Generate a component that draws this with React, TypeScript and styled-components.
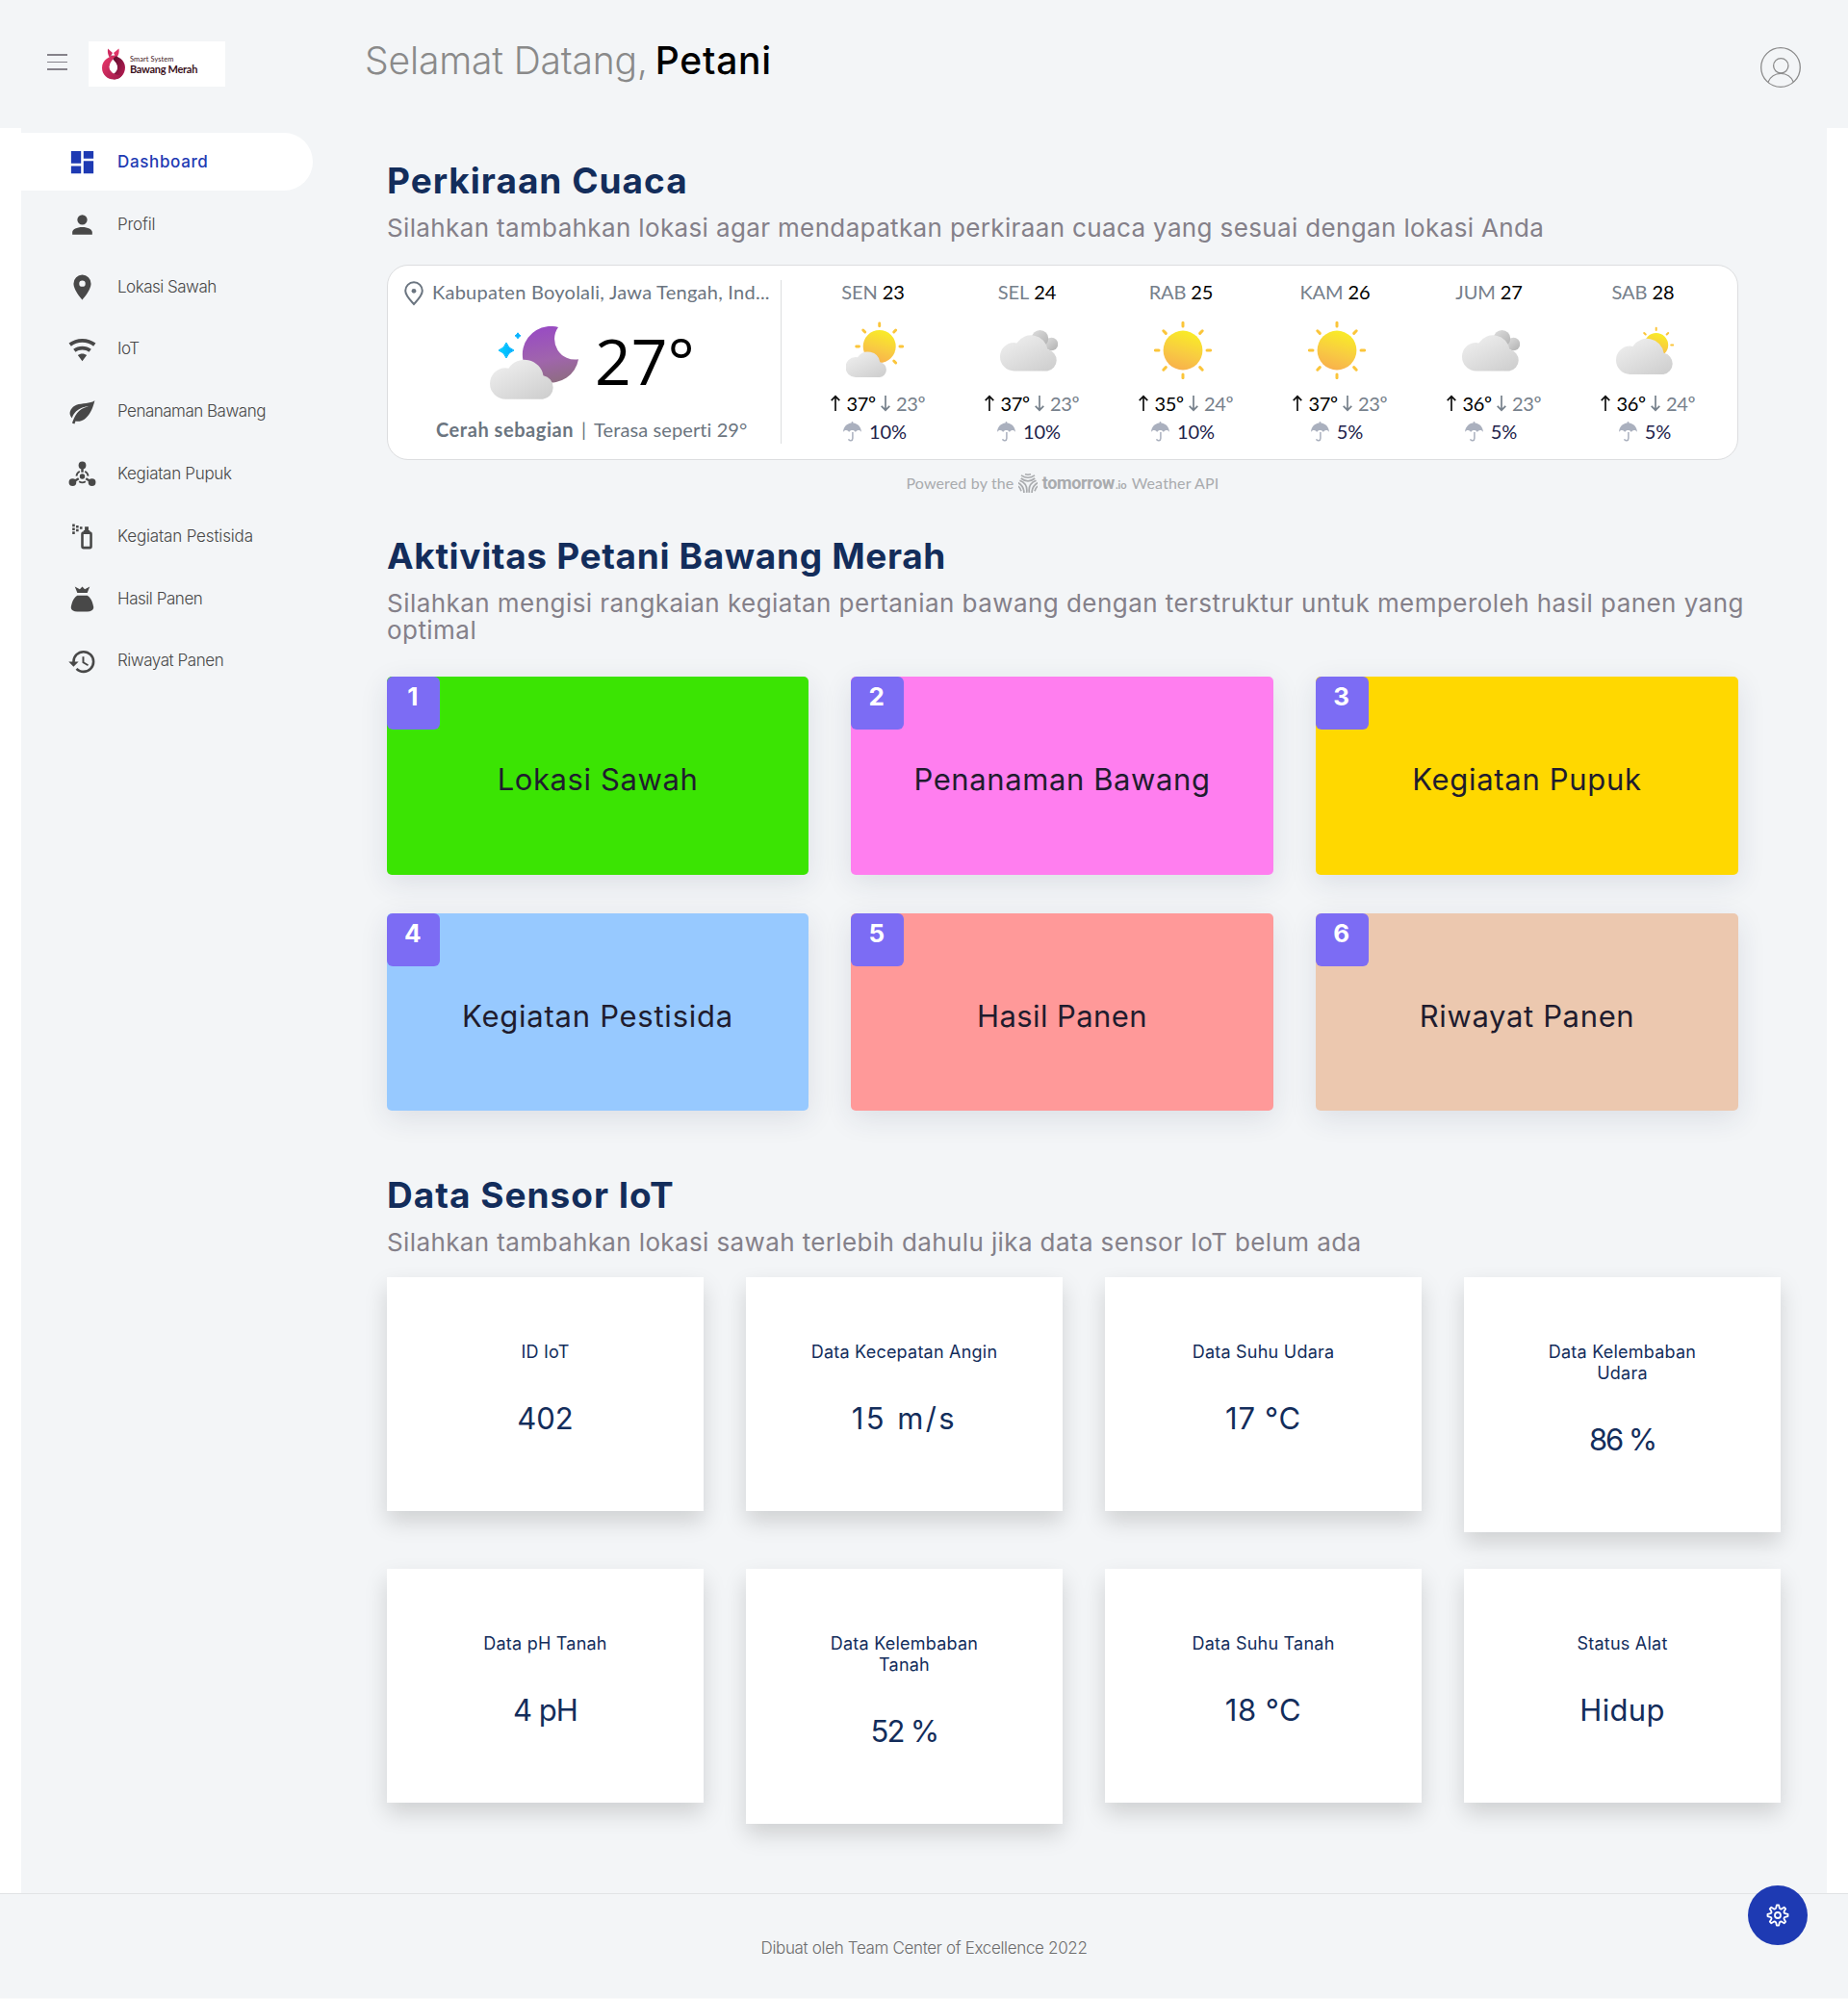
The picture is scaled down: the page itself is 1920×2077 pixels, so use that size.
import React from 'react';
import styled, { createGlobalStyle } from 'styled-components';

const BODY_FONT = `Inter, "Noto Sans", sans-serif`;
const WEATHER_FONT = `Lato, "Open Sans", sans-serif`;

const GlobalStyle = createGlobalStyle`
  *, *::before, *::after { box-sizing: border-box; }
  body { margin: 0; background: #fafafa; font-family: ${BODY_FONT}; }
  h1, h2, p { margin: 0; }
  svg { display: block; flex: none; }
`;

/* ---------- shared text ---------- */

const Tracked = styled.span<{ $ls?: number }>`
  letter-spacing: ${(p) => p.$ls ?? 0}px;
  white-space: nowrap;
`;

/* ---------- page shell ---------- */

const Page = styled.div`
  display: flex;
  flex-direction: column;
  width: 1920px;
  height: 2077px;
`;

const Header = styled.header`
  display: flex;
  align-items: flex-start;
  height: 133px;
  flex: none;
  padding: 0 49px;
  background: #f3f5f7;
`;

const MenuButton = styled.button`
  display: flex;
  flex-direction: column;
  gap: 6px;
  width: 21px;
  margin: 56px 22px 0 0;
  padding: 0;
  border: 0;
  background: none;
`;

const MenuLine = styled.span`
  height: 1.5px;
  background: #85828a;
`;

const Brand = styled.div`
  display: flex;
  width: 142px;
  height: 47px;
  margin-top: 43px;
  padding: 7px 0 0 14px;
  gap: 5px;
  background: #fff;
`;

const BrandText = styled.div`
  display: flex;
  flex-direction: column;
  padding-top: 7px;
  font-family: ${WEATHER_FONT};
  color: #3c1322;
`;

const BrandSmall = styled.span`
  font-size: 7.4px;
  line-height: 9px;
  letter-spacing: 0.1px;
`;

const BrandName = styled.span`
  font-size: 11px;
  line-height: 12px;
  font-weight: 700;
  letter-spacing: -0.3px;
  white-space: nowrap;
`;

const Greeting = styled.h1`
  flex: 1;
  display: flex;
  gap: 8px;
  margin: 38.5px 0 0 145px;
  font-size: 39px;
  line-height: 48px;
  font-weight: 300;
  letter-spacing: -0.15px;
  color: #8a8a8a;
`;

const GreetingName = styled.span`
  font-weight: 500;
  letter-spacing: 0.75px;
  color: #000;
`;

const Avatar = styled.div`
  margin-top: 48.5px;
`;

const Body = styled.div`
  display: flex;
  flex: none;
  height: 1834px;
  padding: 0 22px;
  background: #fff;
`;

const Footer = styled.footer`
  display: flex;
  align-items: center;
  justify-content: center;
  flex: none;
  height: 109px;
  border-top: 1px solid #e1e3e5;
  padding-top: 3px;
  background: #f3f5f7;
  font-size: 17px;
  line-height: 24px;
  font-weight: 300;
  color: #6c6c6c;
`;

const Fab = styled.button`
  position: fixed;
  left: 1816px;
  top: 1959px;
  display: flex;
  align-items: center;
  justify-content: center;
  width: 62px;
  height: 62px;
  padding: 0;
  border: 0;
  border-radius: 50%;
  background: #1e3ab3;
`;

/* ---------- sidebar ---------- */

const Sidebar = styled.nav`
  display: flex;
  flex-direction: column;
  gap: 4.8px;
  width: 304px;
  flex: none;
  padding-top: 5px;
  background: #f3f5f7;
`;

const NavItem = styled.a<{ $active?: boolean }>`
  display: flex;
  align-items: center;
  gap: 21px;
  height: 60px;
  width: 303px;
  padding-left: 48px;
  border-radius: 0 30px 30px 0;
  background: ${(p) => (p.$active ? '#fff' : 'transparent')};
  color: ${(p) => (p.$active ? '#1e3ab3' : '#484848')};
  font-size: 17px;
  font-weight: ${(p) => (p.$active ? 500 : 300)};

  svg { margin-top: 1.5px; }
`;

/* ---------- main sections ---------- */

const Main = styled.main`
  flex: 1;
  padding: 35px 48px 0 76px;
  background: #f3f5f7;
`;

const Section = styled.section<{ $top?: number }>`
  padding-top: ${(p) => p.$top ?? 0}px;
`;

const SectionTitle = styled.h2<{ $ls: number }>`
  font-size: 37px;
  line-height: 40px;
  font-weight: 700;
  letter-spacing: ${(p) => p.$ls}px;
  color: #132d5b;
`;

const SectionLead = styled.p<{ $gap: number; $ls?: number }>`
  margin-top: 15px;
  margin-bottom: ${(p) => p.$gap}px;
  font-size: 26px;
  line-height: 28px;
  letter-spacing: ${(p) => p.$ls ?? 0.38}px;
  color: #848089;
`;

/* ---------- weather ---------- */

const WeatherCard = styled.div`
  display: flex;
  width: 1404px;
  height: 203px;
  padding: 15.5px 16px;
  border: 1px solid #dcdddf;
  border-radius: 22px;
  background: #fff;
  font-family: ${WEATHER_FONT};
  font-size: 20px;
  line-height: 24px;
`;

const Current = styled.div`
  display: flex;
  flex-direction: column;
  width: 393px;
  border-right: 1px solid #dcdee0;
  color: #6b7580;
`;

const Place = styled.div`
  display: flex;
  gap: 9px;
  height: 24px;
  padding-left: 1px;

  svg { margin-top: 1px; }
`;

const CurrentReading = styled.div`
  display: flex;
  gap: 17px;
  height: 119px;
  padding: 23.5px 0 0 90px;
`;

const CurrentTemp = styled.span`
  font-family: "Open Sans", sans-serif;
  font-size: 66px;
  line-height: 70.5px;
  color: #000;
`;

const CurrentSummary = styled.div`
  display: flex;
  gap: 8px;
  padding-left: 34px;
`;

const Condition = styled.b`
  font-weight: 700;
  letter-spacing: 0.55px;
`;

const Forecast = styled.div`
  display: grid;
  grid-template-columns: repeat(6, 160px);
  margin-left: auto;
`;

const Day = styled.div`
  display: flex;
  flex-direction: column;
  align-items: center;
`;

const DayName = styled.div`
  display: flex;
  gap: 5px;
  padding-right: 4px;
  margin-bottom: 19px;
  letter-spacing: -0.1px;
  color: #76808b;
`;

const DayNumber = styled.span`
  color: #000;
`;

const Temps = styled.div`
  display: flex;
  align-items: center;
  margin-top: 13px;
  padding-left: 5px;
  letter-spacing: -0.3px;
`;

const TempValue = styled.span<{ $high?: boolean }>`
  width: 29.5px;
  margin: ${(p) => (p.$high ? '0 6px 0 7px' : '0 0 0 6px')};
  color: ${(p) => (p.$high ? '#000' : '#76808b')};
`;

const Rain = styled.div`
  display: flex;
  align-items: center;
  gap: 8px;
  margin-top: 5px;
  color: #22224a;
`;

const Credit = styled.div`
  display: flex;
  align-items: center;
  justify-content: center;
  width: 1404px;
  height: 20px;
  margin-top: 14px;
  font-family: ${WEATHER_FONT};
  font-size: 16px;
  line-height: 20px;
  color: #a9abae;
`;

const CreditBrand = styled.span`
  margin: 0 0 0 5px;
  font-family: Roboto, sans-serif;
  font-size: 18px;
  font-weight: 700;
  letter-spacing: -0.35px;
`;

const CreditTld = styled.span`
  margin: 4px 5px 0 1px;
  font-size: 11px;
  font-weight: 700;
`;

/* ---------- activities ---------- */

const ActivityGrid = styled.div`
  display: grid;
  grid-template-columns: 438px 439px 439px;
  grid-auto-rows: 205.7px;
  gap: 40px 44px;
  width: 1404px;
`;

const ActivityCard = styled.a<{ $color: string }>`
  position: relative;
  display: flex;
  align-items: center;
  justify-content: center;
  padding-top: 8px;
  border-radius: 5px;
  background: ${(p) => p.$color};
  box-shadow: 0 8px 30px rgba(40, 48, 80, 0.11);
  font-size: 31px;
  color: #1f1c2e;
`;

const StepBadge = styled.span`
  position: absolute;
  left: 0;
  top: 0;
  width: 55px;
  height: 55px;
  padding-right: 1.5px;
  border-radius: 6px;
  background: #7c6cf4;
  color: #fff;
  font-size: 26px;
  line-height: 41px;
  font-weight: 700;
  text-align: center;
`;

/* ---------- sensors ---------- */

const SensorGrid = styled.div`
  display: grid;
  grid-template-columns: repeat(4, 329px);
  gap: 38.5px 44px;
  align-items: start;
`;

const SensorCard = styled.div`
  display: flex;
  flex-direction: column;
  align-items: center;
  padding: 66.500px 66px 77.5px;
  background: #fff;
  box-shadow: 0 11px 22px rgba(0, 0, 0, 0.15);
  color: #132d5b;
  text-align: center;
`;

const SensorLabel = styled.span`
  font-size: 18px;
  line-height: 22px;
  letter-spacing: 0.23px;
`;

const SensorValue = styled.span<{ $ls: number }>`
  margin-top: 40.5px;
  font-size: 31px;
  line-height: 36px;
  letter-spacing: ${(p) => p.$ls}px;
`;

/* ---------- icons ---------- */

const NavIcon = ({ d }: { d: string }) => (
  <svg width="31" height="31" viewBox="0 0 24 24" fill="currentColor">
    <path d={d} fillRule="evenodd" />
  </svg>
);

const MoleculeIcon = () => (
  <svg width="31" height="31" viewBox="0 0 24 24" fill="currentColor">
    <circle cx="12" cy="5" r="3" />
    <circle cx="4.2" cy="18.6" r="3" />
    <circle cx="19.8" cy="18.6" r="3" />
    <circle cx="12" cy="14" r="2.1" />
    <g fill="none" stroke="currentColor" strokeWidth="1.4">
      <path d="M12 7v3.6M6.2 17.4l2.9-1.7M17.8 17.4l-2.9-1.7" strokeWidth="1.9" />
      <path d="M9.9 9.9A4.7 4.7 0 0 0 7.3 13.6M14.1 9.9a4.7 4.7 0 0 1 2.6 3.7M9.4 18a4.7 4.7 0 0 0 5.2 0" />
    </g>
  </svg>
);

const PinIcon = () => (
  <svg width="20" height="26" viewBox="0 0 20 26">
    <path d="M10 24C7 20.6 1.2 15.4 1.2 10.1a8.8 8.8 0 0 1 17.6 0C18.8 15.4 13 20.6 10 24z" fill="none" stroke="#6b7580" strokeWidth="2" />
    <circle cx="10" cy="10.3" r="2.4" fill="#6b7580" />
  </svg>
);

const AvatarIcon = () => (
  <svg width="42" height="42" viewBox="0 0 42 42" fill="none" stroke="#8b8b8b" strokeWidth="1.3">
    <circle cx="21" cy="21" r="20.3" />
    <circle cx="21.3" cy="19.3" r="7.7" />
    <path d="M8 36.3a14.2 14.2 0 0 1 26.4 0" />
  </svg>
);

const OnionLogo = () => (
  <svg width="24" height="33" viewBox="0 0 24 33">
    <defs>
      <linearGradient id="onionA" x1="0" y1="0" x2="1" y2="1">
        <stop offset="0" stopColor="#ee3a6d" />
        <stop offset="1" stopColor="#9c1748" />
      </linearGradient>
      <linearGradient id="onionB" x1="0" y1="0" x2="1" y2="0.6">
        <stop offset="0" stopColor="#4a0a24" />
        <stop offset="1" stopColor="#b01b50" />
      </linearGradient>
    </defs>
    <path d="M6 0.5L11 5 L8 10C6 7 5.6 4 6 .5z" fill="#d02a60" />
    <path d="M17.500 .5L12 5l3 5C17.500 7 18 4 17.500 .5z" fill="#e03568" />
    <path d="M9 8C15 7 24 12 24 20C24 28 18 32.500 12 32.500L12 26C16 24 17.500 18 12.500 13z" fill="url(#onionB)" />
    <path d="M15.500 7C8 8 0 12 0 20.500C0 28 6 32.500 12 32.500C16 32.500 19 31 21 28C16 29 8 26 8 19C8 14 12 11 15.500 7z" fill="url(#onionA)" />
    <path d="M11.800 12.500C14.500 15 16 17.500 16 20C16 23 14 25.500 12.300 26.500C9.500 25 7.500 22.500 7.500 19.500C7.500 17 9.500 14.500 11.800 12.500z" fill="#fff" />
  </svg>
);

const gearPath = Array.from({ length: 8 }, (_, k) => {
  const at = (deg: number, r: number) => {
    const a = ((k * 45 + deg) * Math.PI) / 180;
    return `${(12 + r * Math.cos(a)).toFixed(2)} ${(12 + r * Math.sin(a)).toFixed(2)}`;
  };
  return `${k === 0 ? 'M' : 'L'}${at(-6, 10.6)}L${at(6, 10.6)}L${at(13, 7.9)}Q${at(22.5, 6.5)} ${at(32, 7.9)}`;
}).join('') + 'z';

const GearIcon = () => (
  <svg width="24" height="24" viewBox="0 0 24 24" fill="none" stroke="#fff" strokeWidth="1.8" strokeLinejoin="round">
    <path d={gearPath} />
    <circle cx="12" cy="12" r="3" />
  </svg>
);

const ArrowIcon = ({ up }: { up?: boolean }) => (
  <svg width="10" height="18" viewBox="0 0 10 18" fill="none" stroke={up ? '#111' : '#76808b'} strokeWidth="1.7">
    <path d={up ? 'M5 17V1.500M.7 6.200L5 1.800L9.300 6.200' : 'M5 1V16.500M.7 11.800L5 16.200L9.300 11.800'} />
  </svg>
);

const UmbrellaIcon = () => (
  <svg width="19" height="21" viewBox="0 0 19 21">
    <path d="M9.500 0a.9.9 0 0 1 .9.900v.7c4.700.4 8.300 4 8.600 9.400-.9-1.400-2-2-3.100-2-1.300 0-2.300.7-3.100 2-.8-1.400-1.900-2-3.300-2s-2.500.6-3.300 2c-.8-1.300-1.800-2-3.100-2-1.100 0-2.200.6-3.100 2C.3 5.600 3.900 2 8.600 1.600V.9A.9.9 0 0 1 9.500 0z" fill="#aab0be" />
    <path d="M9.900 11v6.600a2.200 2.200 0 0 1-4.300.7" fill="none" stroke="#aab0be" strokeWidth="1.500" />
  </svg>
);

const TomorrowMark = () => (
  <svg width="20" height="20" viewBox="0 0 20 20" fill="none" stroke="#a9abae" strokeWidth="1.700">
    {[0, 120, 240].map((angle) => (
      <g key={angle} transform={`rotate(${angle} 10 10.7)`}>
        <path d="M7 .8Q10 1.700 13 .8M3 1.900Q10 6.600 17 1.900M2.800 5Q10 10.800 17.200 5" />
      </g>
    ))}
  </svg>
);

const CLOUD = 'M10.500 26A10.500 10.500 0 0 1 10.500 5Q11.500 5 12.500 5.300A12.800 12.800 0 0 1 35.800 10.200A8 8 0 0 1 35.500 26Z';

const DefsHolder = styled.svg`
  position: absolute;
`;

const WeatherDefs = () => (
  <DefsHolder width="0" height="0">
    <defs>
      <linearGradient id="sunFill" x1="0.65" y1="0.05" x2="0.35" y2="1">
        <stop offset="0" stopColor="#f9ea28" />
        <stop offset="0.55" stopColor="#f8cb42" />
        <stop offset="1" stopColor="#f8b04c" />
      </linearGradient>
      <linearGradient id="cloudFill" x1="0.1" y1="0" x2="0.9" y2="1">
        <stop offset="0" stopColor="#f0f0f0" />
        <stop offset="1" stopColor="#cecece" />
      </linearGradient>
      <linearGradient id="rearFill" x1="0.1" y1="0" x2="0.9" y2="1">
        <stop offset="0" stopColor="#dcdcdc" />
        <stop offset="1" stopColor="#b2b2b2" />
      </linearGradient>
      <linearGradient id="moonFill" x1="0.3" y1="0" x2="0.5" y2="1">
        <stop offset="0" stopColor="#984ac4" />
        <stop offset="0.6" stopColor="#a065ac" />
        <stop offset="1" stopColor="#8f6c84" />
      </linearGradient>
      <linearGradient id="starFill" x1="0" y1="0.5" x2="1" y2="0.5">
        <stop offset="0" stopColor="#00d8ff" />
        <stop offset="1" stopColor="#08a4ff" />
      </linearGradient>
    </defs>
  </DefsHolder>
);

type SunProps = { cx: number; cy: number; r: number; from: number; to: number; width: number };

const Sun = ({ cx, cy, r, from, to, width }: SunProps) => (
  <g>
    <g stroke="#fbc53a" strokeWidth={width} strokeLinecap="round">
      {Array.from({ length: 8 }, (_, k) => (
        <path key={k} d={`M${cx} ${cy - from}V${cy - to}`} transform={`rotate(${k * 45} ${cx} ${cy})`} />
      ))}
    </g>
    <circle cx={cx} cy={cy} r={r} fill="url(#sunFill)" />
  </g>
);

type Sky = 'sunny' | 'partly' | 'cloudy' | 'mostly';

const SkyIcon = ({ sky }: { sky: Sky }) => (
  <svg width="60" height="60" viewBox="0 0 60 60">
    {sky === 'sunny' && <Sun cx={30} cy={30} r={20.4} from={25} to={28.6} width={3} />}
    {sky === 'partly' && (
      <>
        <Sun cx={34.7} cy={26} r={17} from={21.2} to={24} width={2.900} />
        <path d={CLOUD} transform="translate(-0.5 32)" fill="url(#cloudFill)" />
      </>
    )}
    {sky === 'cloudy' && (
      <>
        <circle cx="53.500" cy="23.500" r="6.700" fill="url(#rearFill)" />
        <circle cx="41.500" cy="17.800" r="8.800" fill="url(#rearFill)" />
        <path d={CLOUD} transform="translate(0 15) scale(1.385 1.4)" fill="url(#cloudFill)" />
      </>
    )}
    {sky === 'mostly' && (
      <>
        <Sun cx={41.700} cy={24.500} r={12.500} from={15.500} to={17.700} width={2} />
        <path d={CLOUD} transform="translate(0 18.500) scale(1.385 1.4)" fill="url(#cloudFill)" />
      </>
    )}
  </svg>
);

const NightIcon = () => (
  <svg width="92" height="76" viewBox="0 0 92 76">
    <path d="M71 1A29.300 29.300 0 1 0 92 34.300A21.300 21.300 0 0 1 71 1Z" fill="url(#moonFill)" />
    <path d="M17 17Q19 23 25 25Q19 27 17 33Q15 27 9 25Q15 23 17 17Z" fill="url(#starFill)" stroke="#04bcff" strokeWidth="1" strokeLinejoin="round" />
    <path d="M29 6.800Q30 9 32 9.800Q30 10.600 29 12.800Q28 10.600 26 9.800Q28 9 29 6.800Z" fill="#08b4ff" stroke="#08b4ff" strokeWidth="1" />
    <path d={CLOUD} transform="translate(0 35.500) scale(1.55 1.545)" fill="url(#cloudFill)" />
  </svg>
);

/* ---------- data ---------- */

type NavEntry = { label: string; ls: number; d?: string };

const navItems: NavEntry[] = [
  { label: 'Dashboard', ls: 0.65, d: 'M13 3V9H21V3M13 21H21V11H13M3 21H11V15H3M3 13H11V3H3V13Z' },
  { label: 'Profil', ls: -0.2, d: 'M12 4A4 4 0 0 1 16 8A4 4 0 0 1 12 12A4 4 0 0 1 8 8A4 4 0 0 1 12 4M12 14C16.42 14 20 15.79 20 18V20H4V18C4 15.79 7.58 14 12 14Z' },
  { label: 'Lokasi Sawah', ls: -0.5, d: 'M12 11.5A2.5 2.5 0 0 1 9.5 9A2.5 2.5 0 0 1 12 6.5A2.5 2.5 0 0 1 14.5 9A2.5 2.5 0 0 1 12 11.5M12 2A7 7 0 0 0 5 9C5 14.25 12 22 12 22C12 22 19 14.25 19 9A7 7 0 0 0 12 2Z' },
  { label: 'IoT', ls: -0.5, d: 'M12 21L15.6 16.2C14.6 15.45 13.35 15 12 15C10.65 15 9.4 15.45 8.4 16.2L12 21M12 3C7.95 3 4.21 4.34 1.2 6.6L3 9C5.5 7.12 8.62 6 12 6C15.38 6 18.5 7.12 21 9L22.8 6.6C19.79 4.34 16.05 3 12 3M12 9C9.3 9 6.81 9.89 4.8 11.4L6.6 13.8C8.1 12.67 9.97 12 12 12C14.03 12 15.9 12.67 17.4 13.8L19.2 11.4C17.19 9.89 14.7 9 12 9Z' },
  { label: 'Penanaman Bawang', ls: -0.5, d: 'M17 8C8 10 5.9 16.17 3.82 21.34L5.71 22L6.66 19.7C7.14 19.87 7.64 20 8 20C19 20 22 3 22 3C21 5 14 5.25 9 6.25C4 7.25 2 11.5 2 13.5C2 15.5 3.75 17.25 3.75 17.25C7 8 17 8 17 8Z' },
  { label: 'Kegiatan Pupuk', ls: -0.3 },
  { label: 'Kegiatan Pestisida', ls: -0.15, d: 'M10 4H12V6H10V4M7 3H9V5H7V3M7 6H9V8H7V6M6 8V10H4V8H6M6 5V7H4V5H6M6 2V4H4V2H6M13 22A2 2 0 0 1 11 20V10A2 2 0 0 1 13 8V7H14V4H17V7H18V8A2 2 0 0 1 20 10V20A2 2 0 0 1 18 22H13M13 10V20H18V10H13Z' },
  { label: 'Hasil Panen', ls: -0.45, d: 'M16 9C20 11 21 18 21 18C21 18 22 22 16 22H8C2 22 3 18 3 18C3 18 4 11 8 9M14 4L12 2L10 4L6 2L8 7H16L18 2L14 4Z' },
  { label: 'Riwayat Panen', ls: -0.45, d: 'M13.5 8H12V13L16.28 15.54L17 14.33L13.5 12.25V8M13 3A9 9 0 0 0 4 12H1L4.96 16.03L9 12H6A7 7 0 0 1 13 5A7 7 0 0 1 20 12A7 7 0 0 1 13 19C11.07 19 9.32 18.21 8.06 16.94L6.64 18.36C8.27 20 10.5 21 13 21A9 9 0 0 0 22 12A9 9 0 0 0 13 3' },
];

const days: { name: string; date: number; sky: Sky; high: number; low: number; rain: number }[] = [
  { name: 'SEN', date: 23, sky: 'partly', high: 37, low: 23, rain: 10 },
  { name: 'SEL', date: 24, sky: 'cloudy', high: 37, low: 23, rain: 10 },
  { name: 'RAB', date: 25, sky: 'sunny', high: 35, low: 24, rain: 10 },
  { name: 'KAM', date: 26, sky: 'sunny', high: 37, low: 23, rain: 5 },
  { name: 'JUM', date: 27, sky: 'cloudy', high: 36, low: 23, rain: 5 },
  { name: 'SAB', date: 28, sky: 'mostly', high: 36, low: 24, rain: 5 },
];

const activities = [
  { label: 'Lokasi Sawah', color: '#3be403', ls: 0.6 },
  { label: 'Penanaman Bawang', color: '#ff7eef', ls: 0.6 },
  { label: 'Kegiatan Pupuk', color: '#ffd800', ls: 0.7 },
  { label: 'Kegiatan Pestisida', color: '#97c9ff', ls: 0.75 },
  { label: 'Hasil Panen', color: '#ff9999', ls: 0.4 },
  { label: 'Riwayat Panen', color: '#ecc8af', ls: 0.65 },
];

const sensors = [
  { label: 'ID IoT', value: '402', ls: 0 },
  { label: 'Data Kecepatan Angin', value: '15 m/s', ls: 2.4 },
  { label: 'Data Suhu Udara', value: '17 °C', ls: 0.7 },
  { label: 'Data Kelembaban Udara', value: '86 %', ls: -2.1 },
  { label: 'Data pH Tanah', value: '4 pH', ls: -1 },
  { label: 'Data Kelembaban Tanah', value: '52 %', ls: -1.7 },
  { label: 'Data Suhu Tanah', value: '18 °C', ls: 0.5 },
  { label: 'Status Alat', value: 'Hidup', ls: 0.3 },
];

/* ---------- app ---------- */

export default function App() {
  return (
    <Page>
      <GlobalStyle />
      <WeatherDefs />
      <Header>
        <MenuButton aria-label="Menu">
          <MenuLine />
          <MenuLine />
          <MenuLine />
        </MenuButton>
        <Brand>
          <OnionLogo />
          <BrandText>
            <BrandSmall>Smart System</BrandSmall>
            <BrandName>Bawang Merah</BrandName>
          </BrandText>
        </Brand>
        <Greeting>
          <span>Selamat Datang,</span>
          <GreetingName>Petani</GreetingName>
        </Greeting>
        <Avatar>
          <AvatarIcon />
        </Avatar>
      </Header>

      <Body>
        <Sidebar>
          {navItems.map((item, i) => (
            <NavItem key={item.label} $active={i === 0}>
              {item.d ? <NavIcon d={item.d} /> : <MoleculeIcon />}
              <Tracked $ls={item.ls}>{item.label}</Tracked>
            </NavItem>
          ))}
        </Sidebar>

        <Main>
          <Section>
            <SectionTitle $ls={1}>Perkiraan Cuaca</SectionTitle>
            <SectionLead $gap={23.5} $ls={0.36}>
              Silahkan tambahkan lokasi agar mendapatkan perkiraan cuaca yang sesuai dengan lokasi Anda
            </SectionLead>
            <WeatherCard>
              <Current>
                <Place>
                  <PinIcon />
                  <Tracked $ls={0.25}>Kabupaten Boyolali, Jawa Tengah, Ind...</Tracked>
                </Place>
                <CurrentReading>
                  <NightIcon />
                  <CurrentTemp>27°</CurrentTemp>
                </CurrentReading>
                <CurrentSummary>
                  <Condition>Cerah sebagian</Condition>
                  <span>|</span>
                  <Tracked $ls={0.1}>Terasa seperti 29°</Tracked>
                </CurrentSummary>
              </Current>
              <Forecast>
                {days.map((day) => (
                  <Day key={day.name}>
                    <DayName>
                      {day.name} <DayNumber>{day.date}</DayNumber>
                    </DayName>
                    <SkyIcon sky={day.sky} />
                    <Temps>
                      <ArrowIcon up />
                      <TempValue $high>{day.high}º</TempValue>
                      <ArrowIcon />
                      <TempValue>{day.low}º</TempValue>
                    </Temps>
                    <Rain>
                      <UmbrellaIcon />
                      {day.rain}%
                    </Rain>
                  </Day>
                ))}
              </Forecast>
            </WeatherCard>
            <Credit>
              <Tracked $ls={0.15}>Powered by the&nbsp;</Tracked>
              <TomorrowMark />
              <CreditBrand>tomorrow</CreditBrand>
              <CreditTld>.io</CreditTld>
              <Tracked $ls={0.16}>Weather API</Tracked>
            </Credit>
          </Section>

          <Section $top={46.5}>
            <SectionTitle $ls={0.66}>Aktivitas Petani Bawang Merah</SectionTitle>
            <SectionLead $gap={34} $ls={0.45}>
              Silahkan mengisi rangkaian kegiatan pertanian bawang dengan terstruktur untuk memperoleh hasil panen yang optimal
            </SectionLead>
            <ActivityGrid>
              {activities.map((a, i) => (
                <ActivityCard key={a.label} $color={a.color}>
                  <StepBadge>{i + 1}</StepBadge>
                  <Tracked $ls={a.ls}>{a.label}</Tracked>
                </ActivityCard>
              ))}
            </ActivityGrid>
          </Section>

          <Section $top={68}>
            <SectionTitle $ls={1}>Data Sensor IoT</SectionTitle>
            <SectionLead $gap={22}>
              Silahkan tambahkan lokasi sawah terlebih dahulu jika data sensor IoT belum ada
            </SectionLead>
            <SensorGrid>
              {sensors.map((s) => (
                <SensorCard key={s.label}>
                  <SensorLabel>{s.label}</SensorLabel>
                  <SensorValue $ls={s.ls}>{s.value}</SensorValue>
                </SensorCard>
              ))}
            </SensorGrid>
          </Section>
        </Main>
      </Body>

      <Footer>
        <Tracked $ls={-0.34}>Dibuat oleh Team Center of Excellence 2022</Tracked>
      </Footer>
      <Fab aria-label="Pengaturan">
        <GearIcon />
      </Fab>
    </Page>
  );
}
